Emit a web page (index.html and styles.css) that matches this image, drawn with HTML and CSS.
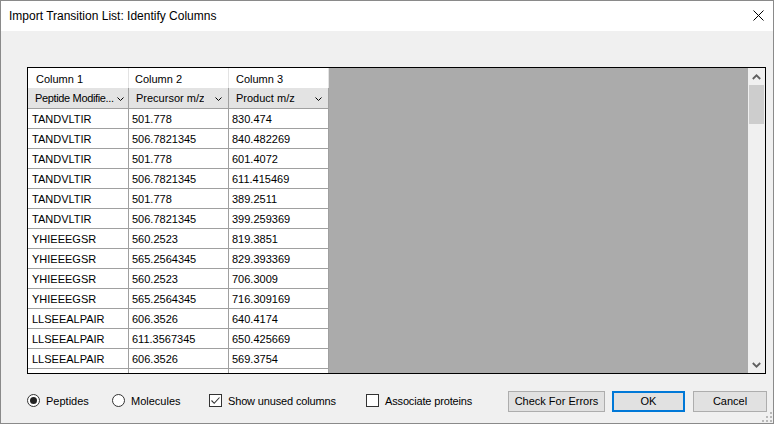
FILE: index.html
```html
<!DOCTYPE html>
<html>
<head>
<meta charset="utf-8">
<title>Import Transition List: Identify Columns</title>
<link rel="stylesheet" href="styles.css">
</head>
<body>
<div class="window">
  <div class="titlebar">
    <span class="title">Import Transition List: Identify Columns</span>
    <svg class="close" width="11" height="11" viewBox="0 0 11 11"><path d="M0.5 0.5 L10.5 10.5 M10.5 0.5 L0.5 10.5" stroke="#000" stroke-width="1" fill="none"/></svg>
  </div>
  <div class="body">
    <div class="grid">
      <div class="table">
        <div class="row head1">
          <div class="cell c1">Column 1</div>
          <div class="cell c2">Column 2</div>
          <div class="cell c3">Column 3</div>
        </div>
        <div class="row head2">
          <div class="cell c1 combo"><span class="ctext tight">Peptide Modifie...</span><svg class="chev" width="7" height="4" viewBox="0 0 7 4"><path d="M0.5 0.5 L3.5 3.5 L6.5 0.5" stroke="#000" fill="none"/></svg></div>
          <div class="cell c2 combo"><span class="ctext">Precursor m/z</span><svg class="chev" width="7" height="4" viewBox="0 0 7 4"><path d="M0.5 0.5 L3.5 3.5 L6.5 0.5" stroke="#000" fill="none"/></svg></div>
          <div class="cell c3 combo"><span class="ctext">Product m/z</span><svg class="chev" width="7" height="4" viewBox="0 0 7 4"><path d="M0.5 0.5 L3.5 3.5 L6.5 0.5" stroke="#000" fill="none"/></svg></div>
        </div>
        <div class="row data"><div class="cell c1">TANDVLTIR</div><div class="cell c2">501.778</div><div class="cell c3">830.474</div></div>
        <div class="row data"><div class="cell c1">TANDVLTIR</div><div class="cell c2">506.7821345</div><div class="cell c3">840.482269</div></div>
        <div class="row data"><div class="cell c1">TANDVLTIR</div><div class="cell c2">501.778</div><div class="cell c3">601.4072</div></div>
        <div class="row data"><div class="cell c1">TANDVLTIR</div><div class="cell c2">506.7821345</div><div class="cell c3">611.415469</div></div>
        <div class="row data"><div class="cell c1">TANDVLTIR</div><div class="cell c2">501.778</div><div class="cell c3">389.2511</div></div>
        <div class="row data"><div class="cell c1">TANDVLTIR</div><div class="cell c2">506.7821345</div><div class="cell c3">399.259369</div></div>
        <div class="row data"><div class="cell c1">YHIEEEGSR</div><div class="cell c2">560.2523</div><div class="cell c3">819.3851</div></div>
        <div class="row data"><div class="cell c1">YHIEEEGSR</div><div class="cell c2">565.2564345</div><div class="cell c3">829.393369</div></div>
        <div class="row data"><div class="cell c1">YHIEEEGSR</div><div class="cell c2">560.2523</div><div class="cell c3">706.3009</div></div>
        <div class="row data"><div class="cell c1">YHIEEEGSR</div><div class="cell c2">565.2564345</div><div class="cell c3">716.309169</div></div>
        <div class="row data"><div class="cell c1">LLSEEALPAIR</div><div class="cell c2">606.3526</div><div class="cell c3">640.4174</div></div>
        <div class="row data"><div class="cell c1">LLSEEALPAIR</div><div class="cell c2">611.3567345</div><div class="cell c3">650.425669</div></div>
        <div class="row data"><div class="cell c1">LLSEEALPAIR</div><div class="cell c2">606.3526</div><div class="cell c3">569.3754</div></div>
        <div class="row data"><div class="cell c1"></div><div class="cell c2"></div><div class="cell c3"></div></div>
      </div>
      <div class="empty"></div>
      <div class="vscroll">
        <div class="arrow"><svg width="9" height="6" viewBox="0 0 9 6"><path d="M0.8 5 L4.5 1.3 L8.2 5" stroke="#606060" stroke-width="1.8" fill="none"/></svg></div>
        <div class="track"><div class="thumb"></div></div>
        <div class="arrow"><svg width="9" height="6" viewBox="0 0 9 6"><path d="M0.8 1 L4.5 4.7 L8.2 1" stroke="#606060" stroke-width="1.8" fill="none"/></svg></div>
      </div>
    </div>
    <div class="controls">
      <label class="opt w1"><span class="radio checked"><span class="dot"></span></span><span class="lbl">Peptides</span></label>
      <label class="opt w2"><span class="radio"></span><span class="lbl">Molecules</span></label>
      <label class="opt w3"><span class="check"><svg width="11" height="11" viewBox="0 0 11 11"><path d="M1.5 5.5 L4.2 8.3 L9.5 2.5" stroke="#333" stroke-width="1.1" fill="none"/></svg></span><span class="lbl">Show unused columns</span></label>
      <label class="opt w4"><span class="check"></span><span class="lbl">Associate proteins</span></label>
      <button class="btn b-check">Check For Errors</button>
      <button class="btn b-ok">OK</button>
      <button class="btn b-cancel">Cancel</button>
    </div>
  </div>
  <svg class="grip" width="10" height="10" viewBox="0 0 10 10">
    <rect x="8" y="0" width="2" height="2" fill="#b8b8b8"/>
    <rect x="4" y="4" width="2" height="2" fill="#b8b8b8"/>
    <rect x="8" y="4" width="2" height="2" fill="#b8b8b8"/>
    <rect x="0" y="8" width="2" height="2" fill="#b8b8b8"/>
    <rect x="4" y="8" width="2" height="2" fill="#b8b8b8"/>
    <rect x="8" y="8" width="2" height="2" fill="#b8b8b8"/>
  </svg>
</div>
</body>
</html>
```

FILE: styles.css
```css
* { box-sizing: border-box; }
html, body { margin: 0; padding: 0; }
body { width: 774px; height: 424px; overflow: hidden; background: #fff; }

.window {
  position: relative;
  width: 774px;
  height: 424px;
  border: 1px solid #8a8a8a;
  display: flex;
  flex-direction: column;
  background: #f0f0f0;
  font-family: "Liberation Sans", Arial, sans-serif;
  font-size: 11px;
  color: #000;
}

.titlebar {
  height: 30px;
  background: #fff;
  display: flex;
  align-items: center;
  justify-content: space-between;
  padding: 0 9px 0 8px;
}
.title {
  font-family: "Liberation Sans", Arial, sans-serif;
  font-size: 12px;
  color: #000;
  margin-top: -1px;
}
.close { display: block; margin-top: -1px; }

.body {
  flex: 1;
  display: flex;
  flex-direction: column;
  padding: 36px 6px 0 26px;
}

.grid {
  width: 739px;
  height: 307px;
  border: 1px solid #000;
  display: flex;
  overflow: hidden;
}
.table {
  width: 301px;
  flex: none;
  background: #fff;
  display: flex;
  flex-direction: column;
  overflow: hidden;
}
.row { display: flex; flex: none; }
.cell {
  flex: none;
  border-right: 1px solid #a0a0a0;
  display: flex;
  align-items: center;
  white-space: nowrap;
  overflow: hidden;
}
.c1 { width: 101px; }
.c2 { width: 100px; }
.c3 { width: 100px; }

.head1 { height: 20px; background: #fff; }
.head1 .cell { border-right-color: #e3e3e3; padding-left: 8px; padding-top: 1px; }
.head1 .c2 { padding-left: 6px; }
.head1 .c3 { padding-left: 7px; }

.head2 { height: 21px; background: #e3e3e3; border-bottom: 1px solid #a0a0a0; }
.combo { justify-content: space-between; padding: 0 6px 0 7px; }
.head2 .c1 { padding-left: 7px; padding-right: 4px; }
.ctext { white-space: nowrap; min-width: 0; overflow: hidden; }
.tight { letter-spacing: -0.35px; }
.chev { flex: none; margin-left: 1px; margin-top: 1px; }

.data { height: 20px; border-bottom: 1px solid #a0a0a0; }
.data .cell { padding-left: 3px; padding-top: 1px; }
.data .c1 { padding-left: 4px; }

.empty { flex: 1; background: #ababab; }

.vscroll {
  width: 17px;
  flex: none;
  background: #f0f0f0;
  display: flex;
  flex-direction: column;
}
.arrow { height: 17px; display: flex; align-items: center; justify-content: center; }
.track { flex: 1; padding: 0 1px; }
.thumb { width: 15px; height: 39px; background: #cdcdcd; }

.controls {
  display: flex;
  align-items: center;
  margin-top: 17px;
  height: 21px;
}
.opt { display: flex; align-items: center; flex: none; margin-top: -2px; }
.w1 { width: 85px; }
.w2 { width: 97px; }
.w3 { width: 157px; }
.w4 { width: 142px; }
.lbl { white-space: nowrap; }
.w3 .lbl, .w4 .lbl { letter-spacing: -0.15px; }

.radio {
  width: 13px; height: 13px;
  border: 1px solid #333;
  border-radius: 50%;
  background: #fff;
  display: flex; align-items: center; justify-content: center;
  margin-right: 6px;
  flex: none;
}
.dot { width: 7px; height: 7px; border-radius: 50%; background: #222; }

.check {
  width: 13px; height: 13px;
  border: 1px solid #333;
  background: #fff;
  display: flex; align-items: center; justify-content: center;
  margin-right: 6px;
  flex: none;
}
.check svg { display: block; }

.btn {
  height: 21px;
  flex: none;
  background: #e1e1e1;
  border: 1px solid #adadad;
  font-family: "Liberation Sans", Arial, sans-serif;
  font-size: 11px;
  color: #000;
  padding: 0 0 1px 0;
}
.b-check { width: 97px; }
.b-ok { width: 73px; margin-left: 7px; border: 2px solid #0078d7; }
.b-cancel { width: 74px; margin-left: 8px; }

.grip { position: absolute; right: 1px; bottom: 1px; }
```
